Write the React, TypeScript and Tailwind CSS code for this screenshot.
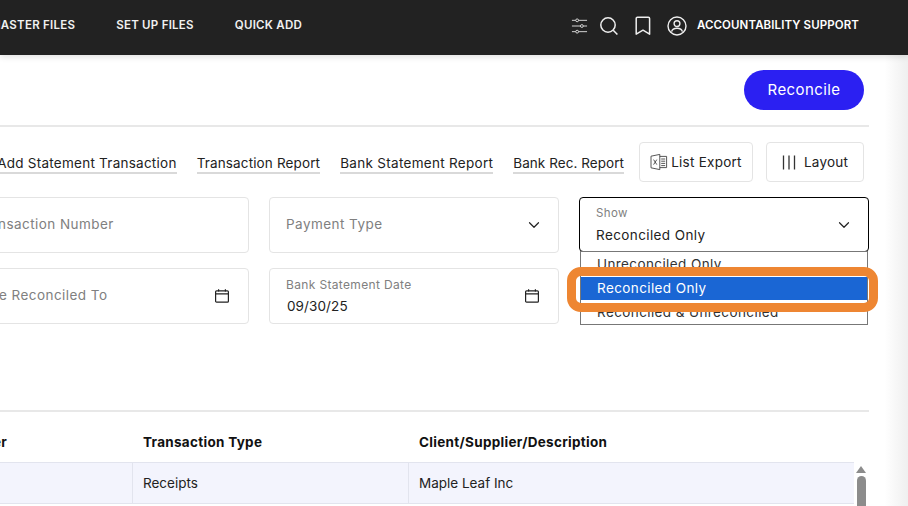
import { ChevronDown } from 'lucide-react'

const FONT = "font-['Inter','Liberation_Sans',sans-serif]"

function CalendarIcon() {
  return (
    <svg className="w-4 h-4 text-[#222]" viewBox="0 0 16 16" fill="none" stroke="currentColor" strokeWidth="1.2">
      <rect x="1.6" y="2.8" width="12.8" height="11.4" rx="1" />
      <path d="M1.6 5.8h12.8M4.6 1.2v2.4M11.4 1.2v2.4" />
    </svg>
  )
}

function Field({ label, value, icon }: { label: string; value?: string; icon: 'chevron' | 'calendar' | 'none' }) {
  return (
    <div className="h-14 rounded border border-[#e4e4e4] bg-white pl-4 pr-4 flex items-center justify-between">
      {value ? (
        <div>
          <div className="-mt-px text-[12px] leading-[14px] tracking-[0.35px] text-[#808080]">{label}</div>
          <div className="mt-[6px] pl-px text-[13.5px] leading-[16px] tracking-[0.1px] text-[#222]">{value}</div>
        </div>
      ) : (
        <span className="-mt-[2px] text-[13.5px] tracking-[0.45px] text-[#808080] whitespace-nowrap">{label}</span>
      )}
      {icon === 'chevron' && <ChevronDown className="w-[18px] h-[18px] text-[#222] mr-[-1px]" strokeWidth={1.6} />}
      {icon === 'calendar' && (
        <span className="mr-[2px]">
          <CalendarIcon />
        </span>
      )}
    </div>
  )
}

function TextLink({ children, tracking }: { children: string; tracking: string }) {
  return (
    <a className={`border-b-2 border-[#d9d9d9] text-[13.5px] leading-[17px] text-[#222] whitespace-nowrap ${tracking}`}>{children}</a>
  )
}

export default function App() {
  return (
    <div className={`w-[908px] h-[506px] overflow-hidden bg-white ${FONT}`}>
      {/* Top nav */}
      <header className="h-[55px] pb-1 bg-[#222222] flex items-center justify-between pr-[49px] text-[11.5px] font-semibold text-white shadow-[0_2px_6px_rgba(0,0,0,0.12)] relative z-10">
        <nav className="flex gap-[41px] -ml-[10px] tracking-[0.25px] text-[#f1f1f1] whitespace-nowrap">
          <span>MASTER FILES</span>
          <span>SET UP FILES</span>
          <span>QUICK ADD</span>
        </nav>
        <div className="flex items-center">
          <svg className="w-[17px] h-[18px] text-[#ddd]" viewBox="0 0 18 18" fill="none" stroke="currentColor" strokeWidth="1">
            <path d="M1 3h4M8 3h9M1 9h9M13 9h4M1 15h4M8 15h9" />
            <circle cx="6.5" cy="3" r="1.5" />
            <circle cx="11.5" cy="9" r="1.5" />
            <circle cx="6.5" cy="15" r="1.5" />
          </svg>
          <svg className="w-[20px] h-[20px] ml-[11px] text-[#eee]" viewBox="0 0 20 20" fill="none" stroke="currentColor" strokeWidth="1.5">
            <circle cx="9" cy="9" r="7.2" />
            <path d="M14.2 14.2 18.4 18.6" />
          </svg>
          <svg className="w-[18px] h-[20px] ml-[15px] text-[#eee]" viewBox="0 0 18 20" fill="none" stroke="currentColor" strokeWidth="1.5">
            <path d="M2.2 2.4a1.2 1.2 0 0 1 1.2-1.2h11a1.2 1.2 0 0 1 1.2 1.2v15.8L9 14.2 2.2 18.2z" strokeLinejoin="round" />
          </svg>
          <svg className="w-[20px] h-[20px] ml-[15px] text-[#eee]" viewBox="0 0 20 20" fill="none" stroke="currentColor" strokeWidth="1.4">
            <circle cx="10" cy="10" r="9" />
            <circle cx="10" cy="7.6" r="2.9" />
            <path d="M4.6 15.6c.6-2.4 2.6-3.4 5.4-3.4s4.8 1 5.4 3.4" />
          </svg>
          <span className="ml-[10px] tracking-[0.1px] whitespace-nowrap text-white">ACCOUNTABILITY SUPPORT</span>
        </div>
      </header>

      <div className="flex h-[451px]">
        <main className="relative w-[869px] shrink-0">
          <div className="h-[72px] pt-[15px] pr-[5px] flex justify-end border-b-2 border-[#e8e8e8]">
            <button className="w-[120px] h-10 pt-px rounded-full bg-[#2b20f2] text-white text-[15px] tracking-[0.4px]">Reconcile</button>
          </div>

          {/* Links and actions */}
          <div className="mt-[15px] h-10 pr-[5px] flex items-center justify-end gap-5">
            <div className="flex gap-5 mt-[4px]">
              <TextLink tracking="tracking-[0.25px]">Add Statement Transaction</TextLink>
              <TextLink tracking="tracking-[0.14px]">Transaction Report</TextLink>
              <TextLink tracking="tracking-[0.3px]">Bank Statement Report</TextLink>
              <TextLink tracking="tracking-[0.06px]">Bank Rec. Report</TextLink>
            </div>
            <div className="flex gap-[13px] -ml-[5px]">
              <button className="w-[114px] h-10 rounded border border-[#e4e4e4] flex items-center justify-center gap-[3px] text-[13.5px] tracking-[0.25px] text-[#222]">
                <svg className="w-[18px] h-[18px] text-[#444]" viewBox="0 0 18 18" fill="none" stroke="currentColor" strokeWidth="0.9">
                  <path d="M1 3.2 9.8 1.4v15.2L1 14.8z" />
                  <path d="M9.8 3.4h6.8v11.2H9.8M11.2 6h4M11.2 8.2h4M11.2 10.4h4M11.2 12.6h4M3.6 6.6l3.2 5M6.8 6.6l-3.2 5" />
                </svg>
                <span className="mt-px">List Export</span>
              </button>
              <button className="w-[98px] h-10 rounded border border-[#e4e4e4] flex items-center justify-center gap-[8px] text-[13.5px] tracking-[0.2px] text-[#222]">
                <svg className="w-[14px] h-[15px] text-[#333]" viewBox="0 0 14 15" fill="none" stroke="currentColor" strokeWidth="1.3">
                  <path d="M1.5 .5v14M7 .5v14M12.5 .5v14" />
                </svg>
                Layout
              </button>
            </div>
          </div>

          {/* Filters */}
          <div className="mt-[15px] -ml-[41px] grid grid-cols-[290px_290px_290px] gap-x-5 gap-y-[15px]">
            <Field label="Transaction Number" icon="none" />
            <Field label="Payment Type" icon="chevron" />
            <div className="relative">
              <div className="h-[55px] rounded border border-black bg-white pl-4 pr-4 flex items-center justify-between">
                <div>
                  <div className="text-[11.5px] leading-[14px] tracking-[0.35px] text-[#808080]">Show</div>
                  <div className="mt-[7px] text-[13.5px] leading-[16px] tracking-[0.4px] text-[#222]">Reconciled Only</div>
                </div>
                <ChevronDown className="w-[18px] h-[18px] text-[#222] mr-[-1px]" strokeWidth={1.6} />
              </div>
              {/* Open list */}
              <div className="absolute left-px top-[54px] w-[288px] h-[74px] border border-[#777] bg-white z-10 text-[13.5px] tracking-[0.4px] text-[#333]">
                <div className="h-[25px] pl-[16px] flex items-center">Unreconciled Only</div>
                <div className="h-[23px] pl-[16px] flex items-center bg-[#1a66d4] text-white">Reconciled Only</div>
                <div className="h-6 pl-[16px] flex items-center">Reconciled &amp; Unreconciled</div>
              </div>
              {/* Callout */}
              <div className="absolute left-[-12px] top-[70px] w-[311px] h-[45px] rounded-[14px] border-[9px] border-[#ee8632] z-20" />
            </div>
            <Field label="Date Reconciled To" icon="calendar" />
            <Field label="Bank Statement Date" value="09/30/25" icon="calendar" />
          </div>

          <div className="mt-[86px] h-[2px] bg-[#e8e8e8]" />

          {/* Table */}
          <div className="-ml-[134px] w-[988px]">
            <div className="h-[50px] grid grid-cols-[266px_276px_446px] items-center text-[13.5px] font-bold tracking-[0.3px] text-[#111] pt-[10px]">
              <div className="pl-px whitespace-nowrap">Transaction Number</div>
              <div className="pl-[11px]">Transaction Type</div>
              <div className="pl-[11px]">Client/Supplier/Description</div>
            </div>
            <div className="h-[42px] grid grid-cols-[266px_276px_446px] items-center bg-[#f3f4fd] border-y border-[#e2e4ee] text-[13.5px] text-[#222]">
              <div className="h-full" />
              <div className="h-full pl-[10px] flex items-center border-l border-[#e2e4ee]">Receipts</div>
              <div className="h-full pl-[10px] flex items-center border-l border-[#e2e4ee]">Maple Leaf Inc</div>
            </div>
          </div>

          {/* Scrollbar */}
          <div className="absolute left-[856px] top-[411px] w-[10px] flex flex-col items-center gap-[3px]">
            <div className="w-0 h-0 border-x-[5px] border-x-transparent border-b-[7px] border-b-[#8c8c8c]" />
            <div className="w-[9px] h-[40px] rounded-t-full bg-[#8c8c8c]" />
          </div>
        </main>
        <div className="flex-1 bg-gradient-to-r from-white from-40% to-[#efefef]" />
      </div>
    </div>
  )
}
